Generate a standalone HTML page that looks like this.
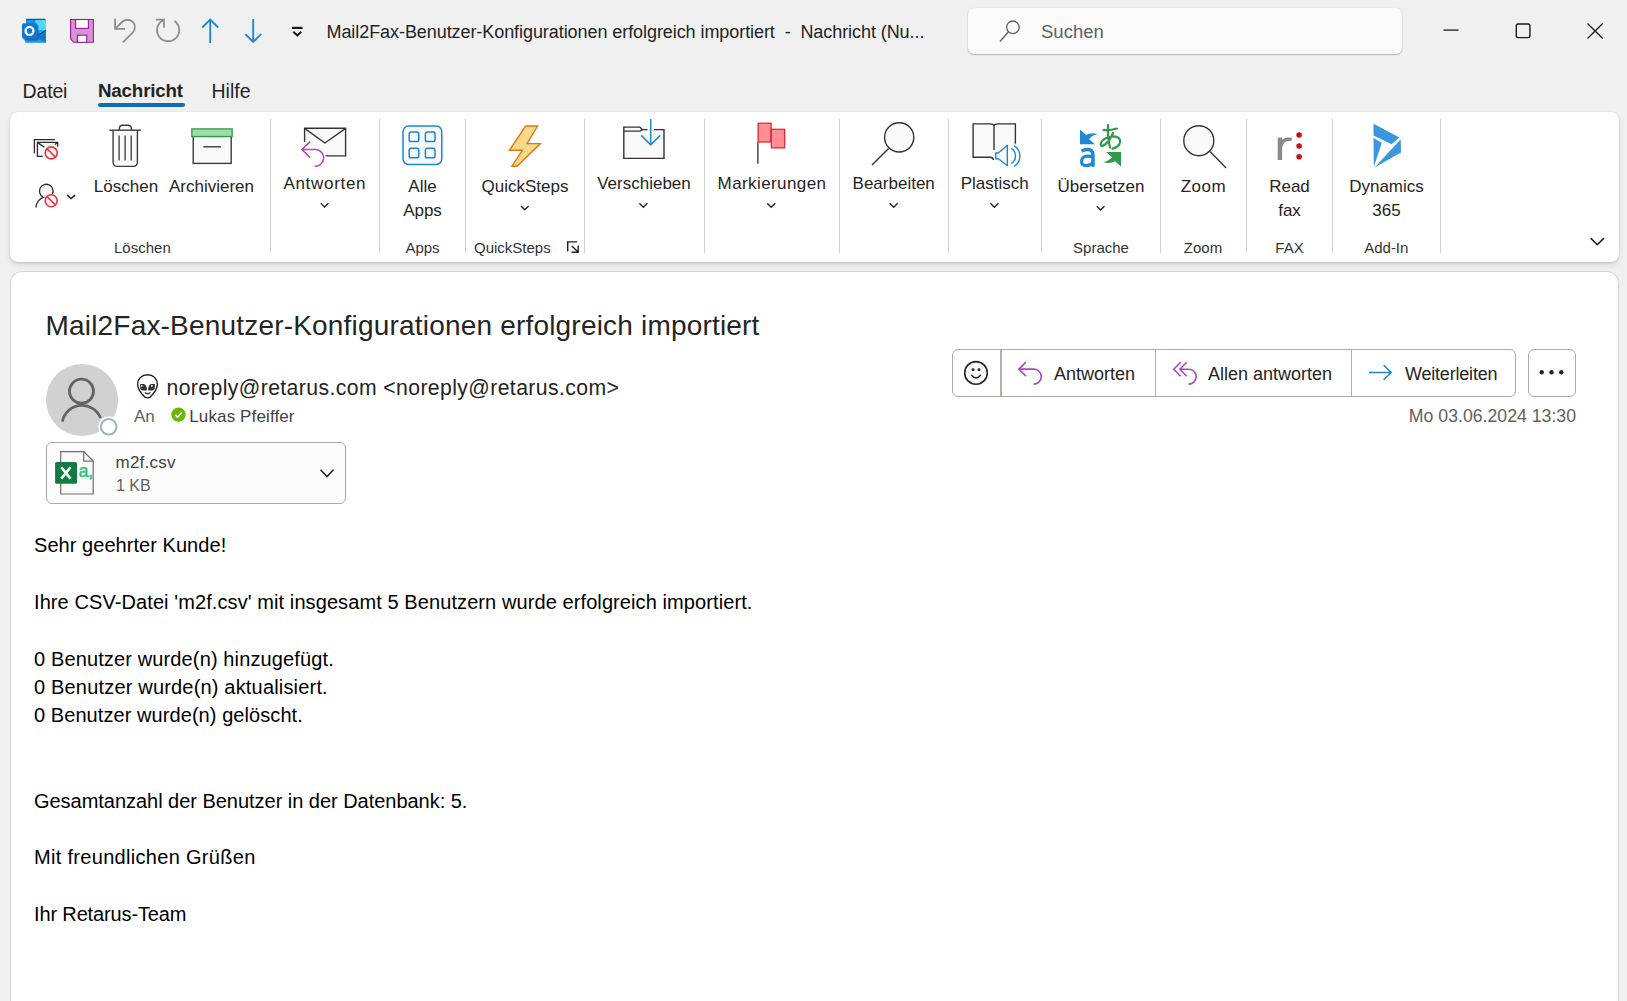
<!DOCTYPE html>
<html><head><meta charset="utf-8">
<style>
*{margin:0;padding:0;box-sizing:border-box}
html,body{width:1627px;height:1001px;overflow:hidden;background:#f0f0f0;font-family:"Liberation Sans",sans-serif;color:#242424}
.a{position:absolute}
.t{position:absolute;white-space:nowrap}
.c{position:absolute;white-space:nowrap;text-align:center;width:200px}
svg{position:absolute;overflow:visible}
#ribbon{position:absolute;left:10px;top:112px;width:1609px;height:150px;background:#fff;border-radius:8px;box-shadow:0 1px 2px rgba(0,0,0,.13),0 3px 7px -1px rgba(0,0,0,.12),0 0 1px rgba(0,0,0,.12)}
#msg{position:absolute;left:10px;top:271px;width:1609px;height:760px;background:#fff;border-radius:12px;border:1px solid #d4d4d4}
.sep{position:absolute;top:119px;width:1px;height:134px;background:#d1d1d1}
.bl{font-size:17px;line-height:17px}
.gl{font-size:15px;line-height:15px;color:#333}
.body{position:absolute;left:34px;top:531px;font-size:20px;line-height:28.4px;color:#000;white-space:pre}
</style></head><body>

<!-- TITLE BAR -->
<div class="t" style="left:326.5px;top:22.7px;font-size:18px;line-height:18px;letter-spacing:-0.07px">Mail2Fax-Benutzer-Konfigurationen erfolgreich importiert&nbsp; -&nbsp; Nachricht (Nu...</div>

<div class="a" style="left:968px;top:8px;width:434px;height:46px;background:#fafafa;border-radius:6px;box-shadow:0 1px 1.5px rgba(0,0,0,.25),0 0 1px rgba(0,0,0,.15)"></div>
<div class="t" style="left:1041px;top:23.4px;font-size:18.5px;line-height:18.5px;color:#616161">Suchen</div>

<!-- MENU -->
<div class="t" style="left:22.5px;top:81.5px;font-size:19.5px;line-height:19.5px;letter-spacing:-0.15px">Datei</div>
<div class="t" style="left:98px;top:82px;font-size:18.8px;line-height:18.8px;font-weight:bold;letter-spacing:-0.2px">Nachricht</div>
<div class="t" style="left:211.5px;top:81.5px;font-size:19.5px;line-height:19.5px">Hilfe</div>
<div class="a" style="left:98px;top:103px;width:87px;height:4px;border-radius:2px;background:#0f6cbd"></div>

<!-- RIBBON -->
<div id="ribbon"></div>
<div class="sep" style="left:270px"></div>
<div class="sep" style="left:379px"></div>
<div class="sep" style="left:465px"></div>
<div class="sep" style="left:584px"></div>
<div class="sep" style="left:704px"></div>
<div class="sep" style="left:839px"></div>
<div class="sep" style="left:948px"></div>
<div class="sep" style="left:1041px"></div>
<div class="sep" style="left:1160px"></div>
<div class="sep" style="left:1246px"></div>
<div class="sep" style="left:1332px"></div>
<div class="sep" style="left:1440px"></div>

<div class="c bl" style="left:26px;top:178.2px">Löschen</div>
<div class="c bl" style="left:111.5px;top:178.2px">Archivieren</div>
<div class="c bl" style="left:224.5px;top:174.8px;letter-spacing:0.7px;text-indent:0.7px">Antworten</div>
<div class="c bl" style="left:322.5px;top:178.2px">Alle</div>
<div class="c bl" style="left:322.5px;top:202.2px">Apps</div>
<div class="c bl" style="left:425px;top:178.2px">QuickSteps</div>
<div class="c bl" style="left:544px;top:174.8px">Verschieben</div>
<div class="c bl" style="left:671.8px;top:174.8px;letter-spacing:0.4px;text-indent:0.4px">Markierungen</div>
<div class="c bl" style="left:793.7px;top:174.8px">Bearbeiten</div>
<div class="c bl" style="left:894.7px;top:174.8px">Plastisch</div>
<div class="c bl" style="left:1001px;top:178.2px">Übersetzen</div>
<div class="c bl" style="left:1103.2px;top:178.2px;letter-spacing:0.5px;text-indent:0.5px">Zoom</div>
<div class="c bl" style="left:1189.5px;top:178.2px">Read</div>
<div class="c bl" style="left:1189.5px;top:202.2px">fax</div>
<div class="c bl" style="left:1286.5px;top:178.2px">Dynamics</div>
<div class="c bl" style="left:1286.5px;top:202.2px">365</div>

<div class="c gl" style="left:42.4px;top:239.8px">Löschen</div>
<div class="c gl" style="left:322.5px;top:239.8px">Apps</div>
<div class="t gl" style="left:474px;top:239.8px">QuickSteps</div>
<div class="c gl" style="left:1001px;top:239.8px">Sprache</div>
<div class="c gl" style="left:1103px;top:239.8px">Zoom</div>
<div class="c gl" style="left:1189.5px;top:239.8px">FAX</div>
<div class="c gl" style="left:1286.3px;top:239.8px">Add-In</div>

<!-- MESSAGE -->
<div id="msg"></div>
<div class="t" style="left:45.5px;top:312.3px;font-size:28px;line-height:28px;letter-spacing:0.19px">Mail2Fax-Benutzer-Konfigurationen erfolgreich importiert</div>

<div class="a" style="left:46px;top:364px;width:72px;height:72px;border-radius:50%;background:#d1d1d1"></div>

<div class="t" style="left:166.5px;top:377.4px;font-size:21.2px;line-height:21.2px;letter-spacing:0.40px">noreply@retarus.com &lt;noreply@retarus.com&gt;</div>
<div class="t" style="left:134px;top:407.6px;font-size:17px;line-height:17px;color:#616161">An</div>
<div class="t" style="left:189.3px;top:407.6px;font-size:17px;line-height:17px;color:#424242;letter-spacing:0.12px">Lukas Pfeiffer</div>

<div class="a" style="left:46px;top:442px;width:300px;height:62px;border:1px solid #a9a9a9;border-radius:6px;background:#fcfcfc"></div>
<div class="t" style="left:115.5px;top:453.5px;font-size:17px;line-height:17px;color:#424242;letter-spacing:0.25px">m2f.csv</div>
<div class="t" style="left:116px;top:478.2px;font-size:16px;line-height:16px;color:#616161">1 KB</div>

<div class="a" style="left:952px;top:349px;width:564px;height:48px;border:1.6px solid #adaaa7;border-radius:6px"></div>
<div class="a" style="left:1000px;top:350px;width:1.5px;height:46px;background:#b3b0ad"></div>
<div class="a" style="left:1154.5px;top:350px;width:1.5px;height:46px;background:#b3b0ad"></div>
<div class="a" style="left:1350.5px;top:350px;width:1.5px;height:46px;background:#b3b0ad"></div>
<div class="a" style="left:1528px;top:349px;width:48px;height:48px;border:1.6px solid #adaaa7;border-radius:6px"></div>
<div class="t" style="left:1054px;top:365.1px;font-size:18px;line-height:18px">Antworten</div>
<div class="t" style="left:1208px;top:365.1px;font-size:18px;line-height:18px">Allen antworten</div>
<div class="t" style="left:1405px;top:365.1px;font-size:18px;line-height:18px;letter-spacing:-0.2px">Weiterleiten</div>
<div class="t" style="left:1376px;width:200px;text-align:right;top:407.8px;font-size:17.7px;line-height:17.7px;color:#616161">Mo 03.06.2024 13:30</div>

<div class="body"><span style="letter-spacing:0.05px">Sehr geehrter Kunde!</span>

<span style="letter-spacing:0.09px">Ihre CSV-Datei 'm2f.csv' mit insgesamt 5 Benutzern wurde erfolgreich importiert.</span>

<span style="letter-spacing:0.13px">0 Benutzer wurde(n) hinzugefügt.</span>
<span style="letter-spacing:0.18px">0 Benutzer wurde(n) aktualisiert.</span>
<span style="letter-spacing:0.07px">0 Benutzer wurde(n) gelöscht.</span>


<span style="letter-spacing:-0.03px">Gesamtanzahl der Benutzer in der Datenbank: 5.</span>

<span style="letter-spacing:0.31px">Mit freundlichen Grüßen</span>

<span style="letter-spacing:-0.14px">Ihr Retarus-Team</span></div>

<svg width="1627" height="1001" viewBox="0 0 1627 1001" style="left:0;top:0" fill="none" stroke-linecap="butt">
<!-- outlook -->
<g>
<rect x="26" y="19" width="19.5" height="12" rx="1.2" fill="#1b8fe0"/>
<rect x="35.5" y="19.8" width="10" height="11" fill="#50d9ff"/>
<rect x="26" y="18.8" width="19.5" height="1.3" rx=".6" fill="#0a5aa8"/>
<path d="M25.2 30.3 L45.8 30.3 L45.8 42.8 L25.2 42.8 Z" fill="#1a9be6"/>
<path d="M35.5 36.5 L45.8 30.3 L45.8 42.8 Z" fill="#1377cc"/>
<path d="M35.5 36.5 L45.8 30.3" stroke="#0b3b75" stroke-width="1"/>
<rect x="23.6" y="25" width="15" height="15.5" rx="1.5" fill="#0b4f8f" opacity=".6"/>
<rect x="22" y="23.2" width="15.5" height="15.4" rx="1.5" fill="#0f78d4"/>
<ellipse cx="29.5" cy="30.9" rx="3.9" ry="4.0" stroke="#fff" stroke-width="2.4"/>
</g>
<!-- save -->
<path d="M70.6 19.5 H93.4 V42.3 H73.8 L70.6 39.1 Z" fill="#d990d6" stroke="#8f1f99" stroke-width="1.1"/>
<rect x="75.6" y="19.5" width="12.8" height="8.9" fill="#fafafa" stroke="#8f1f99" stroke-width="1.1"/>
<rect x="77.5" y="35.2" width="9.3" height="7.1" fill="#fafafa" stroke="#8f1f99" stroke-width="1.1"/>
<!-- undo -->
<path d="M115.1 18.8 V28.8 H125" stroke="#8e8e8e" stroke-width="1.8"/>
<path d="M115.4 28.6 L122 22 A7.5 7.5 0 0 1 132.7 32.6 L122.8 42.4" stroke="#8e8e8e" stroke-width="1.8"/>
<!-- redo -->
<path d="M155.9 19.6 H164 V27.7" stroke="#8e8e8e" stroke-width="1.8"/>
<path d="M174.5 21 A11.1 11.1 0 1 1 164 19.8" stroke="#8e8e8e" stroke-width="1.8"/>
<!-- up / down -->
<path d="M210.2 43 V19.8 M202.2 27.5 L210.2 19.5 L218.2 27.5" stroke="#2088d0" stroke-width="1.9"/>
<path d="M253.2 19 V42.2 M245.3 34.1 L253.2 42 L261.2 34.1" stroke="#2088d0" stroke-width="1.9"/>
<!-- qat dropdown -->
<path d="M292 27.9 H302.6" stroke="#1a1a1a" stroke-width="2.2"/>
<path d="M293.3 31.8 L297.3 35.5 L301.3 31.8" stroke="#1a1a1a" stroke-width="2"/>
<!-- search -->
<circle cx="1012.9" cy="27.3" r="6.3" stroke="#616161" stroke-width="1.3"/>
<path d="M1008.3 32 L1000 41.5" stroke="#616161" stroke-width="1.4"/>
<!-- window controls -->
<path d="M1443.5 30.1 H1458.5" stroke="#1a1a1a" stroke-width="1.3"/>
<rect x="1516.3" y="24" width="13.6" height="13.6" rx="1.8" stroke="#1a1a1a" stroke-width="1.4"/>
<path d="M1587.5 23.5 L1602.7 38.5 M1602.7 23.5 L1587.5 38.5" stroke="#1a1a1a" stroke-width="1.3"/>

<!-- RIBBON ICONS -->
<!-- ignore -->
<path d="M34.4 153.6 V139.6 H54.8" stroke="#2b2b2b" stroke-width="1.3"/>
<path d="M42.8 156.4 H37.4 V142.4 H57.7 V146.8" stroke="#2b2b2b" stroke-width="1.3" fill="#f7f7f7"/>
<path d="M37.6 142.6 L44.4 147.3 M57.5 142.6 L55 144.6" stroke="#2b2b2b" stroke-width="1.3"/>
<circle cx="51.2" cy="152.9" r="6" fill="#f7f7f7" stroke="#e8353a" stroke-width="1.6"/>
<path d="M47 148.7 L55.4 157.1" stroke="#e8353a" stroke-width="1.6"/>
<!-- junk -->
<path d="M52.4 194 A6.8 6.8 0 1 0 42.8 196.9" stroke="#2b2b2b" stroke-width="1.3" fill="#f7f7f7"/>
<path d="M36 207.5 A10.5 10.5 0 0 1 44.5 197.2" stroke="#2b2b2b" stroke-width="1.3"/>
<circle cx="51.2" cy="200.7" r="6" fill="#f7f7f7" stroke="#e8353a" stroke-width="1.6"/>
<path d="M47 196.5 L55.4 204.9" stroke="#e8353a" stroke-width="1.6"/>
<path d="M67.1 195.1 L71.1 198.5 L75.1 195.1" stroke="#242424" stroke-width="1.5"/>
<!-- trash -->
<path d="M113.1 130.2 V162.6 A3.8 3.8 0 0 0 116.9 166.4 H133.6 A3.8 3.8 0 0 0 137.4 162.6 V130.2" fill="#f9f9f9" stroke="#3b3b3b" stroke-width="1.4"/>
<path d="M109.3 130.2 H140.9" stroke="#3b3b3b" stroke-width="1.4"/>
<path d="M119.4 130 V128.5 A3.2 3.2 0 0 1 122.6 125.3 H128.2 A3.2 3.2 0 0 1 131.4 128.5 V130" stroke="#3b3b3b" stroke-width="1.4"/>
<path d="M119.1 135.6 V160.6 M125.1 135.6 V160.6 M131.2 135.6 V160.6" stroke="#3b3b3b" stroke-width="1.3"/>
<!-- archive -->
<rect x="193.2" y="136.4" width="38" height="27" fill="#f9f9f9" stroke="#3b3b3b" stroke-width="1.4"/>
<rect x="191.8" y="128.9" width="40.4" height="7.6" fill="#a0dca8" stroke="#2d9b49" stroke-width="1.3"/>
<path d="M203.3 146.8 H220.9" stroke="#3b3b3b" stroke-width="1.4"/>
<!-- reply ribbon -->
<path d="M304.6 142.1 V128.3 H345.6 V155.9 H325.4" fill="#f9f9f9" stroke="#333" stroke-width="1.4"/>
<path d="M304.9 128.6 L324.9 143 L345.3 128.6" stroke="#333" stroke-width="1.4"/>
<path d="M310.2 141.6 L302 149.5 L310.2 157.8 M302.4 149.5 H316 A8.3 8.3 0 0 1 314.6 166.2" stroke="#b146c2" stroke-width="1.6"/>
<!-- apps -->
<rect x="403" y="126.1" width="38.8" height="38.4" rx="5.5" fill="#f9f9f9" stroke="#1b86d2" stroke-width="1.5"/>
<rect x="409.2" y="132" width="9.6" height="9.6" rx="1.8" stroke="#1b86d2" stroke-width="1.5"/>
<rect x="425.4" y="132" width="9.6" height="9.6" rx="1.8" stroke="#1b86d2" stroke-width="1.5"/>
<rect x="409.2" y="148.2" width="9.6" height="9.6" rx="1.8" stroke="#1b86d2" stroke-width="1.5"/>
<rect x="425.4" y="148.2" width="9.6" height="9.6" rx="1.8" stroke="#1b86d2" stroke-width="1.5"/>
<!-- quicksteps -->
<path d="M525.6 126 H537.6 L527 143.6 H540.4 L517 166.3 H511.8 L522.4 150.3 H509.4 Z" fill="#f7d98c" stroke="#e07a10" stroke-width="1.4" stroke-linejoin="miter"/>
<!-- move -->
<path d="M623.8 158.4 V127.1 H639.8 L642.3 129.6 H664 V158.4 Z" fill="#f9f9f9" stroke="#333" stroke-width="1.4"/>
<path d="M624 131.1 H640 L642.4 129.6" stroke="#333" stroke-width="1.3"/>
<path d="M647.5 129.6 H654" stroke="#fff" stroke-width="2"/>
<path d="M650.7 119 V145 M641.2 135.4 L650.7 144.9 L660.2 135.4" stroke="#1f8ad2" stroke-width="1.5"/>
<!-- flag -->
<path d="M757.9 142.5 V163.8" stroke="#2b2b2b" stroke-width="1.3"/>
<rect x="758.1" y="123.2" width="13" height="18.8" fill="#ff8f95" stroke="#d4222a" stroke-width="1.2"/>
<rect x="771.3" y="129.3" width="13.4" height="18.6" fill="#ff8f95" stroke="#d4222a" stroke-width="1.2"/>
<!-- find -->
<circle cx="899.2" cy="137.4" r="14.6" fill="#f9f9f9" stroke="#333" stroke-width="1.4"/>
<path d="M872 165 L888.6 148.6" stroke="#333" stroke-width="1.4"/>
<!-- immersive reader -->
<path d="M993.4 160 Q993 157.3 990 157.3 H973.1 V123.9 H990 Q994 123.9 994 126.5 Q994 123.9 998 123.9 H1015.4 V143.7" fill="#f9f9f9" stroke="#333" stroke-width="1.4"/>
<path d="M994 126.5 V150" stroke="#333" stroke-width="1.4"/>
<path d="M995.7 153 H998.3 L1007.3 145.2 V165.8 L998.3 158.8 H995.7 Z" fill="#f9f9f9" stroke="#1e88d2" stroke-width="1.4" stroke-linejoin="round"/>
<path d="M1011.3 148.4 A9 9 0 0 1 1011.3 163.6 M1014.3 145.6 A12.5 12.5 0 0 1 1014.3 166.4" stroke="#1e88d2" stroke-width="1.4"/>
<!-- translate -->
<path d="M1080 129.6 L1080 144.3 L1094.8 144.3 L1089 139 Q1092.5 135 1097.9 134.2 Q1091.5 132 1086 135 Z" fill="#1e88d2"/>
<path d="M1121 166.6 L1121 152 L1106.2 152 L1112 157.3 Q1108.5 161.3 1103.1 162.1 Q1109.5 164.3 1115 161.3 Z" fill="#2f9b48"/>
<path d="M1081.6 151.2 Q1084.5 149.6 1087.8 149.6 Q1093 149.7 1093 155.3 V166.7" stroke="#1e88d2" stroke-width="3.5"/><path d="M1093 157.3 Q1090.3 156 1086.8 156.2 Q1081.6 156.6 1081.6 161.4 Q1081.6 165.5 1086 165.5 Q1090.5 165.4 1093 162.6" stroke="#1e88d2" stroke-width="3.1"/>
<path d="M1103.5 130 Q1110 130.5 1117 128.5 M1108 125.2 Q1107.5 138 1110 147.5 M1113 133 Q1109 143 1102.5 146 Q1100.6 146.8 1100.8 143.8 Q1102 137.5 1113.5 136.4 Q1120.4 136.8 1120.1 141.8 Q1119.5 146.6 1112.5 148.6" stroke="#2f9b48" stroke-width="2.2" stroke-linecap="round"/>
<!-- zoom -->
<circle cx="1198.8" cy="140.7" r="15" fill="#f9f9f9" stroke="#333" stroke-width="1.4"/>
<path d="M1210 151.6 L1226.1 168" stroke="#333" stroke-width="1.4"/>
<!-- retarus -->
<path d="M1279.9 160 V137.6" stroke="#8a8a8a" stroke-width="4.4"/><path d="M1280.8 146.5 Q1282.2 139.6 1288 139.3 Q1290.2 139.2 1291.6 139.6" stroke="#8a8a8a" stroke-width="3.6"/>
<circle cx="1299.1" cy="135" r="2.8" fill="#c4101a"/>
<circle cx="1299.1" cy="146" r="2.8" fill="#c4101a"/>
<circle cx="1299.1" cy="156.8" r="2.8" fill="#c4101a"/>
<!-- dynamics -->
<path d="M1373.5 123.7 L1399.4 137.4 L1391.6 144.2 L1373.5 135.5 Z" fill="#3a96dd"/>
<path d="M1373.5 138 L1381.8 143.1 L1373.8 167.1 Z" fill="#3a96dd"/>
<path d="M1400.7 139.3 L1401 152.5 L1374.6 167.4 Z" fill="#3a96dd"/>
<!-- chevrons under buttons -->
<g stroke="#242424" stroke-width="1.4">
<path d="M320.8 203.2 L324.6 207 L328.4 203.2"/>
<path d="M521 206 L524.8 209.8 L528.6 206"/>
<path d="M639.4 203.3 L643.4 207.3 L647.4 203.3"/>
<path d="M767.2 203.3 L771.2 207.3 L775.2 203.3"/>
<path d="M889.7 203.3 L893.7 207.3 L897.7 203.3"/>
<path d="M990.4 203.2 L994.4 207.2 L998.4 203.2"/>
<path d="M1096.8 206.2 L1100.6 210 L1104.4 206.2"/>
</g>
<!-- launcher -->
<path d="M567.7 251.4 V241.9 H577.1" stroke="#1f1f1f" stroke-width="1.4"/>
<path d="M571.9 246 L578 252 M578.2 245.5 V252.3 H571.6" stroke="#1f1f1f" stroke-width="1.4"/>
<!-- ribbon collapse -->
<path d="M1590.7 238.1 L1597.3 244.7 L1603.9 238.1" stroke="#1f1f1f" stroke-width="1.5"/>

<!-- MESSAGE ICONS -->
<!-- avatar person -->
<circle cx="81.5" cy="391.2" r="12" stroke="#636363" stroke-width="2.8"/>
<path d="M62.4 421.5 A20 20 0 0 1 100.6 418" stroke="#636363" stroke-width="2.8"/>
<circle cx="108.7" cy="426.7" r="10.4" fill="#fff"/>
<circle cx="108.7" cy="426.7" r="7.8" stroke="#98b4c0" stroke-width="2"/>
<!-- alien -->
<path d="M147.5 374.8 C141.6 374.8 137.6 378.8 137.6 384.2 C137.6 389 141 393.3 145 397.2 Q147.5 398.6 150 397.2 C154 393.3 157.4 389 157.4 384.2 C157.4 378.8 153.4 374.8 147.5 374.8 Z" fill="#fff" stroke="#1f1f1f" stroke-width="1.4"/>
<path d="M140.1 384 H144.2 Q146.8 385.3 146.8 388.6 V390.6 H143 Q140.1 390.2 140.1 387 Z" fill="#333"/>
<path d="M154.9 384 H150.8 Q148.2 385.3 148.2 388.6 V390.6 H152 Q154.9 390.2 154.9 387 Z" fill="#333"/>
<circle cx="141.8" cy="385.9" r="0.9" fill="#fff"/>
<circle cx="151.8" cy="385.9" r="0.9" fill="#fff"/>
<path d="M144.8 392.6 Q147.6 394.9 150.5 392.6" stroke="#333" stroke-width="1.3"/>
<!-- green check -->
<circle cx="178.5" cy="414.6" r="7.2" fill="#6bb700"/>
<path d="M175.3 414.9 L177.5 417 L181.7 412.6" stroke="#fff" stroke-width="1.6"/>
<!-- excel -->
<path d="M60.7 451.6 H83.7 L93.2 461.1 V494 H60.7 Z" fill="#fafafa" stroke="#6e6e6e" stroke-width="1.2"/>
<path d="M83.7 451.6 V461.1 H93.2" stroke="#6e6e6e" stroke-width="1.2"/>
<rect x="55.1" y="461.9" width="21.9" height="21.9" rx="1.6" fill="#107c41"/>
<path d="M61.3 467.2 L70.5 478.6 M70.5 467.2 L61.3 478.6" stroke="#fff" stroke-width="2.6"/>
<text x="78.8" y="477.4" font-family="Liberation Sans" font-size="17.5" letter-spacing="-0.2" fill="#33c481" stroke="#33c481" stroke-width="0.5">a,</text>
<!-- attach chevron -->
<path d="M320.5 469.8 L327 476.6 L333.5 469.8" stroke="#242424" stroke-width="1.6"/>
<!-- smiley -->
<circle cx="976" cy="372.9" r="11.3" fill="#fafafa" stroke="#242424" stroke-width="1.6"/>
<circle cx="973" cy="369.8" r="1.45" fill="#242424"/>
<circle cx="979" cy="369.8" r="1.45" fill="#242424"/>
<path d="M971.2 375.1 Q976 380.8 980.9 375.1" stroke="#242424" stroke-width="1.5"/>
<!-- reply -->
<path d="M1025.9 362.1 L1018.9 369.1 L1025.9 376.1 M1019.2 369.1 H1034 A7.5 7.5 0 0 1 1033.5 384.1" stroke="#b146c2" stroke-width="1.6"/>
<!-- reply all -->
<path d="M1180.7 362.2 L1173.7 369.2 L1180.7 376.2 M1186.8 362.2 L1179.8 369.2 L1186.8 376.2 M1180.1 369.2 H1189 A7.4 7.4 0 0 1 1188.5 384.1" stroke="#b146c2" stroke-width="1.6"/>
<!-- forward -->
<path d="M1369 372.5 H1391 M1383.6 365 L1391.1 372.5 L1383.6 380" stroke="#1e88d2" stroke-width="1.6"/>
<!-- more dots -->
<circle cx="1541.7" cy="372.3" r="2.2" fill="#242424"/>
<circle cx="1551.5" cy="372.3" r="2.2" fill="#242424"/>
<circle cx="1561.3" cy="372.3" r="2.2" fill="#242424"/>
</svg>

</body></html>
